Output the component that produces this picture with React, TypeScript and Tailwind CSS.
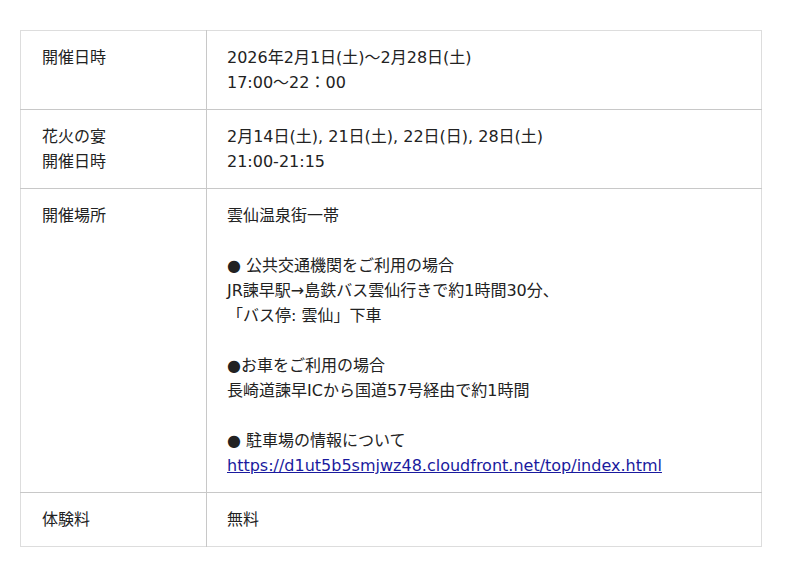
import React from 'react';

const rows: { label: string[]; body: React.ReactNode }[] = [
  {
    label: ['開催日時'],
    body: (
      <>
        2026年2月1日(土)〜2月28日(土)
        <br />
        17:00〜22：00
      </>
    ),
  },
  {
    label: ['花火の宴', '開催日時'],
    body: (
      <>
        2月14日(土), 21日(土), 22日(日), 28日(土)
        <br />
        21:00-21:15
      </>
    ),
  },
  {
    label: ['開催場所'],
    body: (
      <>
        雲仙温泉街一帯
        <br />
        <br />
        ● 公共交通機関をご利用の場合
        <br />
        JR諫早駅→島鉄バス雲仙行きで約1時間30分、
        <br />
        「バス停: 雲仙」下車
        <br />
        <br />
        ●お車をご利用の場合
        <br />
        長崎道諫早ICから国道57号経由で約1時間
        <br />
        <br />
        ● 駐車場の情報について
        <br />
        <a href="#" className="text-[#1a1a9e] underline">
          https://d1ut5b5smjwz48.cloudfront.net/top/index.html
        </a>
      </>
    ),
  },
  { label: ['体験料'], body: <>無料</> },
];

export default function App() {
  return (
    <div className="min-h-[577px] bg-white px-5 pt-[30px] font-['DejaVu_Sans','Noto_Sans_CJK_JP',sans-serif] text-[16px] leading-[25px] text-[#222]">
      <table className="w-[742px] border-collapse border border-[#ddd]">
        <tbody>
          {rows.map((row, i) => (
            <tr key={i} className="border-b border-[#c8c8c8] last:border-[#ddd]">
              <th className="w-[186px] border-r border-[#c8c8c8] py-[14px] pl-[21px] pr-4 text-left align-top font-normal">
                {row.label.map((l, j) => (
                  <div key={j}>{l}</div>
                ))}
              </th>
              <td className="py-[14px] pl-5 pr-4 align-top">{row.body}</td>
            </tr>
          ))}
        </tbody>
      </table>
    </div>
  );
}
